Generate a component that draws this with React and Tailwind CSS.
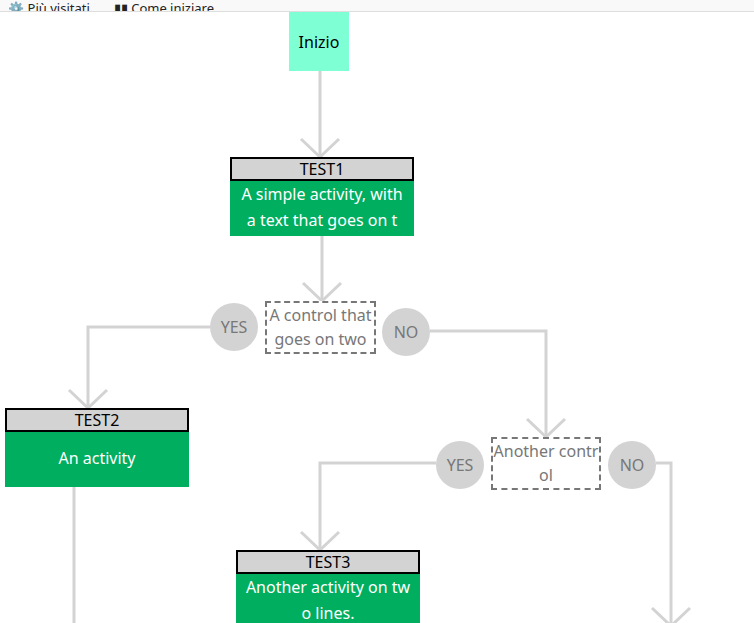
import React from "react";

const Activity = ({ x, y, title, lines }) => (
  <div className="absolute w-[184px]" style={{ left: x, top: y }}>
    <div className="h-[24px] border-2 border-black bg-[#d3d3d3] text-center text-[16px] leading-[20px] text-black">
      {title}
    </div>
    <div className="flex h-[55px] flex-col justify-center bg-[#00ae60] px-2 pb-[4px] text-center text-[16px] leading-[26px] text-white">
      {lines.map((l) => (
        <div key={l}>{l}</div>
      ))}
    </div>
  </div>
);

const Circle = ({ x, y, label }) => (
  <div
    className="absolute flex h-[48px] w-[48px] items-center justify-center rounded-full bg-[#d3d3d3] text-[16px] text-[#777]"
    style={{ left: x - 24, top: y - 24 }}
  >
    {label}
  </div>
);

const Control = ({ x, y, w, lines }) => (
  <div
    className="absolute flex h-[53px] flex-col justify-center border-2 border-dashed border-[#777] bg-white pb-[2px] text-center text-[16px] leading-[25px] text-[#777]"
    style={{ left: x, top: y, width: w }}
  >
    {lines.map((l) => (
      <div key={l} className="overflow-hidden whitespace-nowrap">{l}</div>
    ))}
  </div>
);

const arrow = (x, y) => `M${x - 19} ${y - 18} L${x} ${y} L${x + 19} ${y - 18}`;

export default function App() {
  return (
    <div className="relative h-[623px] w-[754px] overflow-hidden bg-white font-['Lato',sans-serif]">
      <div className="flex h-[12px] items-end gap-6 overflow-hidden border-b border-[#ddd] bg-[#f9f9f9] pl-[8px] text-[13px] text-[#222]">
        <span className="relative top-[7px]">⚙ Più visitati</span>
        <span className="relative top-[7px]">▮▮ Come iniziare</span>
      </div>
      <svg className="absolute left-0 top-0" width="754" height="623" fill="none" stroke="#d3d3d3" strokeWidth="3">
        <path d="M320 71 V157" />
        <path d={arrow(320, 157)} />
        <path d="M322 235 V301" />
        <path d={arrow(322, 301)} />
        <path d="M210 327 H88 V408" />
        <path d={arrow(88, 408)} />
        <path d="M430 331 H546 V437" />
        <path d={arrow(546, 437)} />
        <path d="M74 486 V623" />
        <path d="M436 463 H320 V550" />
        <path d={arrow(320, 550)} />
        <path d="M656 463 H671 V623" />
        <path d={arrow(671, 626)} />
      </svg>
      <div className="absolute left-[289px] top-[12px] flex h-[59px] w-[60px] items-center justify-center bg-[#7fffd4] text-[16px] text-black">
        Inizio
      </div>
      <Activity x={230} y={157} title="TEST1" lines={["A simple activity, with", "a text that goes on t"]} />
      <Control x={265} y={301} w={111} lines={["A control that", "goes on two"]} />
      <Circle x={234} y={327} label="YES" />
      <Circle x={406} y={332} label="NO" />
      <Activity x={5} y={408} title="TEST2" lines={["An activity"]} />
      <Control x={491} y={437} w={110} lines={["Another contr", "ol"]} />
      <Circle x={460} y={465} label="YES" />
      <Circle x={632} y={465} label="NO" />
      <Activity x={236} y={550} title="TEST3" lines={["Another activity on tw", "o lines."]} />
    </div>
  );
}
